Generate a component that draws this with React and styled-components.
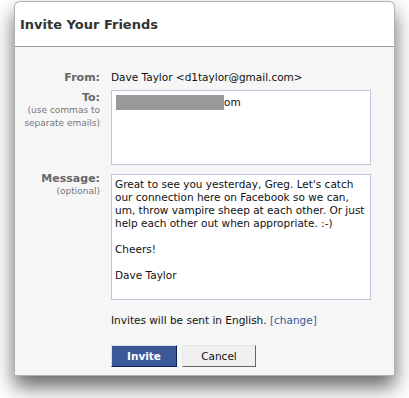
import React from 'react'
import styled, { createGlobalStyle } from 'styled-components'

const GlobalStyle = createGlobalStyle`
  body {
    margin: 0;
    background: #fff;
    font-family: 'DejaVu Sans', 'Liberation Sans', sans-serif;
  }
`

const messageLines = [
  "Great to see you yesterday, Greg. Let's catch",
  'our connection here on Facebook so we can,',
  'um, throw vampire sheep at each other. Or just',
  'help each other out when appropriate. :-)',
  '',
  'Cheers!',
  '',
  'Dave Taylor',
]

const App = () => {
  return (
    <Page>
      <GlobalStyle />
      <Dialog>
        <Header>
          <Title>Invite Your Friends</Title>
        </Header>
        <Body>
          <Form>
            <Label>From:</Label>
            <Value>Dave Taylor &lt;d1taylor@gmail.com&gt;</Value>

            <LabelCell>
              <Label>To:</Label>
              <Hint>(use commas to</Hint>
              <Hint>separate emails)</Hint>
            </LabelCell>
            <Field height={75} padTop={4}>
              <Redacted />
              om
            </Field>

            <LabelCell>
              <Label>Message:</Label>
              <Hint>(optional)</Hint>
            </LabelCell>
            <Field height={126} padTop={3} tall>
              {messageLines.map((line, i) => (
                <Line key={i}>{line || '\u00a0'}</Line>
              ))}
            </Field>

            <span />
            <Notice>
              Invites will be sent in English. <ChangeLink href='#'>[change]</ChangeLink>
            </Notice>

            <span />
            <Buttons>
              <Button primary>Invite</Button>
              <Button>Cancel</Button>
            </Buttons>
          </Form>
        </Body>
      </Dialog>
    </Page>
  )
}

const Page = styled.div`
  width: 409px;
  height: 398px;
  padding: 1px 0 0 14px;
  box-sizing: border-box;
  overflow: hidden;
`

const Dialog = styled.div`
  width: 381px;
  border: 1px solid rgba(0, 0, 0, 0.28);
  border-radius: 6px 6px 0 0;
  background: #f6f6f6;
  box-shadow: 0 11px 20px rgba(0, 0, 0, 0.6);
  box-sizing: border-box;
`

const Header = styled.div`
  height: 44px;
  background: #fff;
  border-radius: 6px 6px 0 0;
  border-bottom: 1px solid #999;
  display: flex;
  align-items: center;
  padding-left: 5px;
`

const Title = styled.h1`
  margin: 0;
  font-size: 13px;
  font-weight: bold;
  color: #333;
`

const Body = styled.div`
  padding: 24px 0 8px 0;
`

const Form = styled.div`
  display: grid;
  grid-template-columns: 85px 260px;
  column-gap: 11px;
  row-gap: 6px;
  font-size: 10.5px;
  line-height: 13px;
  color: #111;
`

const LabelCell = styled.div`
  display: flex;
  flex-direction: column;
  align-items: flex-end;
  padding-top: 1px;
`

const Label = styled.div`
  text-align: right;
  font-weight: bold;
  color: #666;
  line-height: 13px;
  font-size: 11px;
`

const Hint = styled.div`
  text-align: right;
  color: #777;
  font-size: 9px;
  line-height: 13px;
`

const Value = styled.div`
  line-height: 13px;
`

const Field = styled.div`
  height: ${(p) => p.height}px;
  box-sizing: border-box;
  border: 1px solid #bdc7d8;
  background: #fff;
  padding: ${(p) => p.padTop}px 3px 0 3px;
  margin-top: ${(p) => (p.tall ? 3 : 0)}px;
`

const Redacted = styled.span`
  display: inline-block;
  width: 108px;
  height: 15px;
  background: #999;
  vertical-align: -4px;
  margin-left: 1px;
`

const Line = styled.div`
  white-space: nowrap;
`

const Notice = styled.div`
  margin-top: 8px;
`

const ChangeLink = styled.a`
  color: #3b5998;
  text-decoration: none;
`

const Buttons = styled.div`
  display: flex;
  gap: 5px;
  margin-top: 12px;
`

const Button = styled.button`
  height: 22px;
  box-sizing: border-box;
  padding: 0;
  width: ${(p) => (p.primary ? 66 : 74)}px;
  font-family: 'DejaVu Sans', sans-serif;
  font-size: 10.5px;
  font-weight: ${(p) => (p.primary ? 'bold' : 'normal')};
  color: ${(p) => (p.primary ? '#fff' : '#111')};
  background: ${(p) => (p.primary ? '#3b5998' : '#f0f0f0')};
  border: 1px solid;
  border-color: ${(p) =>
    p.primary ? '#d9dfea #0e1f5b #0e1f5b #d9dfea' : '#e7e7e7 #666 #666 #e7e7e7'};
  cursor: pointer;
`

export default App
